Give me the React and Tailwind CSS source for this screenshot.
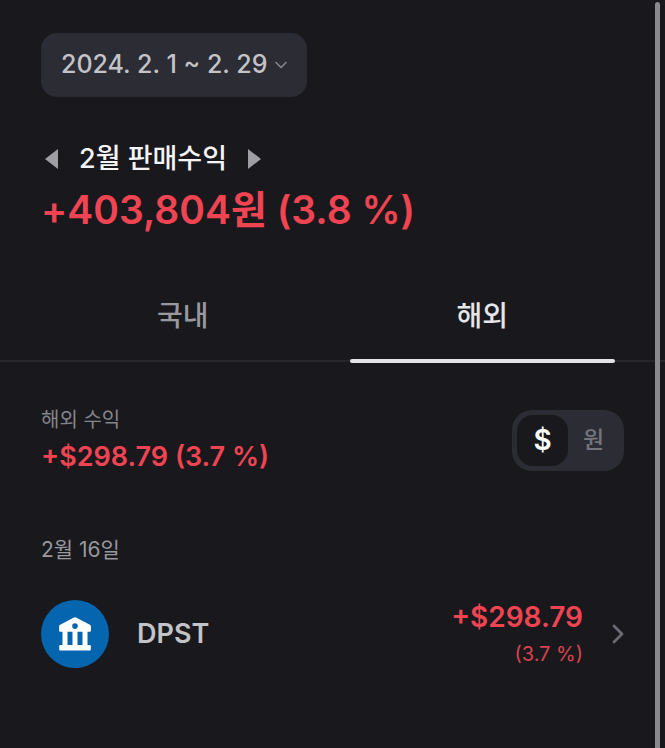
import React, { useState } from 'react'
import clsx from 'clsx'

const tabs = [
  { id: 'domestic', label: '국내' },
  { id: 'overseas', label: '해외' },
]

const currencies = [
  { id: 'usd', label: '$' },
  { id: 'krw', label: '원' },
]

const sales = [
  {
    date: '2월 16일',
    items: [{ ticker: 'DPST', profit: '+$298.79', rate: '(3.7 %)' }],
  },
]

function BankIcon() {
  return (
    <svg viewBox="0 0 34 36" className="h-9 w-[34px]" fill="#fff" aria-hidden="true">
      <path
        fillRule="evenodd"
        d="M16 1.6a2 2 0 0 1 2 0l13.9 7.2a2 2 0 0 1 1 1.8v4.2a1 1 0 0 1-1 1h-2.4V29h2.3a1 1 0 0 1 1 1v3.6a1 1 0 0 1-1 1H2.2a1 1 0 0 1-1-1V30a1 1 0 0 1 1-1h2.3V15.8H2.1a1 1 0 0 1-1-1v-4.2a2 2 0 0 1 1-1.8zM17 7.3a2.8 2.8 0 1 0 0 5.6 2.8 2.8 0 0 0 0-5.6zM9.5 15.8V29h5V15.8zM19.5 15.8V29h5V15.8z"
      />
    </svg>
  )
}

export default function App() {
  const [tab, setTab] = useState('overseas')
  const [currency, setCurrency] = useState('usd')

  return (
    <div className="relative min-h-screen bg-[#19181d] pt-[33px] font-['Inter','Noto_Sans_CJK_KR',sans-serif] text-[#c3c3c8]">
      <header className="px-[41px]">
        <button
          type="button"
          className="flex h-16 items-center gap-2 rounded-2xl bg-[#2c2c35] px-5 text-[25px] font-medium"
        >
          2024. 2. 1 ~ 2. 29
          <svg viewBox="0 0 12 8" className="h-2 w-3" fill="none" stroke="#85858c" strokeWidth="1.6" strokeLinecap="round" strokeLinejoin="round">
            <path d="M1 1.5 6 6.5l5-5" />
          </svg>
        </button>

        <div className="mt-[42px] flex h-10 items-center gap-5 pl-1">
          <button type="button" aria-label="이전 달">
            <svg viewBox="0 0 14 20" className="h-5 w-[14px]" fill="#9e9ea4">
              <path d="M13 0v20L0 10z" />
            </svg>
          </button>
          <h1 className="text-[27px] font-medium text-[#f4f4f6]">2월 판매수익</h1>
          <button type="button" aria-label="다음 달">
            <svg viewBox="0 0 14 20" className="h-5 w-[14px]" fill="#9e9ea4">
              <path d="M1 0v20l13-10z" />
            </svg>
          </button>
        </div>
        <p className="mt-[7px] text-[39px] leading-[48px] font-semibold text-[#f04452]">+403,804원 (3.8 %)</p>
      </header>

      <div role="tablist" className="mt-[54px] flex border-b-2 border-[#26262c] px-[33px]">
        {tabs.map(({ id, label }) => (
          <button
            key={id}
            type="button"
            role="tab"
            aria-selected={tab === id}
            onClick={() => setTab(id)}
            className={clsx(
              'relative h-[72px] flex-1 pb-[17px] text-[28px] font-medium',
              tab === id ? 'text-[#e6e6e9]' : 'text-[#98989e]'
            )}
          >
            {label}
            {tab === id && (
              <span className="absolute inset-x-[17px] -bottom-[3px] h-1 rounded-full bg-[#e3e3e6]" />
            )}
          </button>
        ))}
      </div>

      <main className="px-[41px]">
        <section className="mt-[43px] flex items-center justify-between">
          <div>
            <h2 className="text-[20px] leading-[30px] text-[#85858c]">해외 수익</h2>
            <p className="mt-1 text-[27px] leading-9 font-semibold text-[#f04452]">+$298.79 (3.7 %)</p>
          </div>
          <div className="flex rounded-[20px] bg-[#2c2c35] p-[5px]">
            {currencies.map(({ id, label }) => (
              <button
                key={id}
                type="button"
                aria-pressed={currency === id}
                onClick={() => setCurrency(id)}
                className={clsx(
                  'h-[51px] w-[51px] rounded-2xl',
                  currency === id
                    ? 'bg-[#19181d] text-[28px] font-semibold text-white'
                    : 'text-[23px] font-medium text-[#74747c]'
                )}
              >
                {label}
              </button>
            ))}
          </div>
        </section>

        {sales.map(({ date, items }) => (
          <section key={date} className="mt-[60px]">
            <h3 className="text-[21px] leading-[30px] text-[#98989e]">{date}</h3>
            <ul className="mt-[34px]">
              {items.map(({ ticker, profit, rate }) => (
                <li key={ticker}>
                  <button type="button" className="flex w-full items-center text-left">
                    <span className="flex h-[68px] w-[68px] items-center justify-center rounded-full bg-[#0565ae]">
                      <BankIcon />
                    </span>
                    <span className="ml-7 text-[27px] font-semibold">{ticker}</span>
                    <span className="ml-auto flex flex-col text-right text-[#f04452]">
                      <span className="text-[28px] leading-9 font-semibold">{profit}</span>
                      <span className="mt-1 text-[20px] leading-[30px] text-[#d8434f]">{rate}</span>
                    </span>
                    <svg viewBox="0 0 12 20" className="ml-[29px] h-5 w-3" fill="none" stroke="#6b6b75" strokeWidth="2.8" strokeLinecap="round" strokeLinejoin="round">
                      <path d="m2 2 8 8-8 8" />
                    </svg>
                  </button>
                </li>
              ))}
            </ul>
          </section>
        ))}
      </main>

      {/* scroll indicator */}
      <div className="absolute top-[2px] right-[5px] bottom-0 w-[5px] rounded-t-full bg-[#8a8a8c]" />
    </div>
  )
}
